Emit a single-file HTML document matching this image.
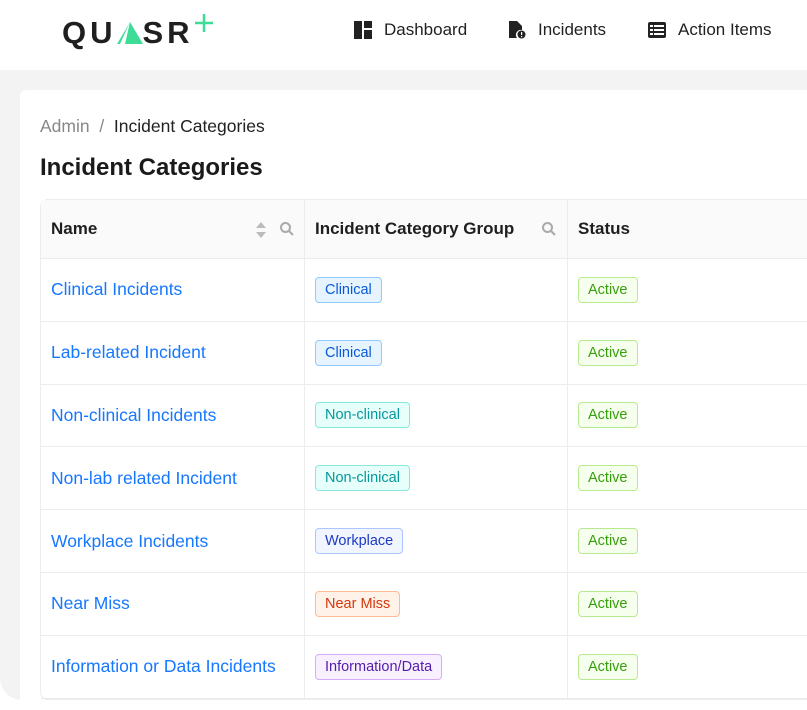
<!DOCTYPE html>
<html><head><meta charset="utf-8"><style>
*{box-sizing:border-box;margin:0;padding:0}
body{width:807px;height:700px;overflow:hidden;background:#fff;font-family:"Liberation Sans",sans-serif;position:relative}
.hdr{position:absolute;left:0;top:0;width:807px;height:70px;background:#fff}
.logo{position:absolute;left:62px;top:15px;font-size:31px;font-weight:bold;color:#1f1f1f;letter-spacing:4px}
.nav{position:absolute;top:20px;font-size:17px;color:#222;display:flex;align-items:center}
.nav svg{margin-right:12px}
.bg{position:absolute;left:0;top:70px;width:807px;height:630px;background:#f3f3f3;border-bottom-left-radius:22px}
.card{position:absolute;left:20px;top:90px;width:800px;height:620px;background:#fff;border-top-left-radius:6px}
.bc{position:absolute;left:40px;top:116px;font-size:17.5px;color:#888}
.bc b{font-weight:normal;color:#222}
h1{position:absolute;left:40px;top:154px;font-size:24px;font-weight:bold;color:#1a1a1a}
table{position:absolute;left:40px;top:199px;border-collapse:separate;border-spacing:0;width:800px;border:1px solid #ececec;border-radius:8px;border-right:none}
th{background:#fafafa;height:59px;text-align:left;font-size:17px;font-weight:bold;color:#1f1f1f;padding-left:10px;border-bottom:1px solid #ececec;border-right:1px solid #ececec;position:relative}
td{height:62.8px;border-bottom:1px solid #ececec;border-right:1px solid #ececec;padding-left:10px;font-size:17.5px}
td.n{color:#1677ff}
.t{display:inline-block;font-size:14.5px;padding:4px 9px;border-radius:4px;border:1px solid}
.c{background:#e6f4ff;border-color:#91caff;color:#0958d9}
.nc{background:#e6fffb;border-color:#87e8de;color:#08979c}
.w{background:#f0f5ff;border-color:#adc6ff;color:#1d39c4}
.nm{background:#fff2e8;border-color:#ffbb96;color:#d4380d}
.i{background:#f9f0ff;border-color:#d3adf7;color:#531dab}
.a{background:#f6ffed;border-color:#b7eb8f;color:#389e0d}
.ic{position:absolute;top:21px}
</style></head><body>
<div class="hdr">
<div class="logo">QU<svg width="26" height="22" viewBox="0 0 26 22" style="vertical-align:-1px"><polygon points="13,0 26,22 8,22" fill="#3ddc97"/><polygon points="9,7 13,0 3,22 0,22" fill="#3ddc97"/></svg>SR</div>
<svg style="position:absolute;left:193px;top:12px" width="22" height="22" viewBox="0 0 22 22"><path d="M11 2V20M2 11H20" stroke="#3ddc97" stroke-width="2.5"/></svg>
<div class="nav" style="left:354px"><svg width="18" height="18" viewBox="0 0 18 18"><rect x="0" y="0" width="8" height="18" fill="#222"/><rect x="10" y="0" width="8" height="7" fill="#222"/><rect x="10" y="9" width="8" height="9" fill="#222"/></svg>Dashboard</div>
<div class="nav" style="left:508px"><svg width="18" height="18" viewBox="0 0 18 18"><path d="M1 0H9L14 5V9A5 5 0 0 0 9 17H1Z" fill="#222"/><circle cx="13.5" cy="13.5" r="4" fill="#222"/><rect x="13" y="11" width="1.2" height="3" fill="#fff"/><rect x="13" y="15" width="1.2" height="1.2" fill="#fff"/></svg>Incidents</div>
<div class="nav" style="left:648px"><svg width="18" height="16" viewBox="0 0 18 16"><rect x="0" y="0" width="18" height="16" rx="2" fill="#222"/><rect x="2" y="3" width="3" height="2" fill="#fff"/><rect x="6" y="3" width="10" height="2" fill="#fff"/><rect x="2" y="7" width="3" height="2" fill="#fff"/><rect x="6" y="7" width="10" height="2" fill="#fff"/><rect x="2" y="11" width="3" height="2" fill="#fff"/><rect x="6" y="11" width="10" height="2" fill="#fff"/></svg>Action Items</div>
</div>
<div class="bg"></div>
<div class="card"></div>
<div class="bc">Admin &nbsp;/&nbsp; <b>Incident Categories</b></div>
<h1>Incident Categories</h1>
<table>
<tr><th style="width:264px">Name
<svg class="ic" style="left:214px" width="12" height="18" viewBox="0 0 12 18"><path d="M6 1L11 7H1Z M6 17L11 11H1Z" fill="#bbb"/></svg>
<svg class="ic" style="left:238px" width="16" height="16" viewBox="0 0 16 16"><circle cx="6.5" cy="6.5" r="4.5" stroke="#aaa" stroke-width="2" fill="none"/><path d="M10 10L14 14" stroke="#aaa" stroke-width="2"/></svg></th>
<th style="width:263px">Incident Category Group
<svg class="ic" style="left:236px" width="16" height="16" viewBox="0 0 16 16"><circle cx="6.5" cy="6.5" r="4.5" stroke="#aaa" stroke-width="2" fill="none"/><path d="M10 10L14 14" stroke="#aaa" stroke-width="2"/></svg></th>
<th>Status</th></tr>
<tr><td class="n">Clinical Incidents</td><td><span class="t c">Clinical</span></td><td><span class="t a">Active</span></td></tr>
<tr><td class="n">Lab-related Incident</td><td><span class="t c">Clinical</span></td><td><span class="t a">Active</span></td></tr>
<tr><td class="n">Non-clinical Incidents</td><td><span class="t nc">Non-clinical</span></td><td><span class="t a">Active</span></td></tr>
<tr><td class="n">Non-lab related Incident</td><td><span class="t nc">Non-clinical</span></td><td><span class="t a">Active</span></td></tr>
<tr><td class="n">Workplace Incidents</td><td><span class="t w">Workplace</span></td><td><span class="t a">Active</span></td></tr>
<tr><td class="n">Near Miss</td><td><span class="t nm">Near Miss</span></td><td><span class="t a">Active</span></td></tr>
<tr><td class="n">Information or Data Incidents</td><td><span class="t i">Information/Data</span></td><td><span class="t a">Active</span></td></tr>
</table>
</body></html>
